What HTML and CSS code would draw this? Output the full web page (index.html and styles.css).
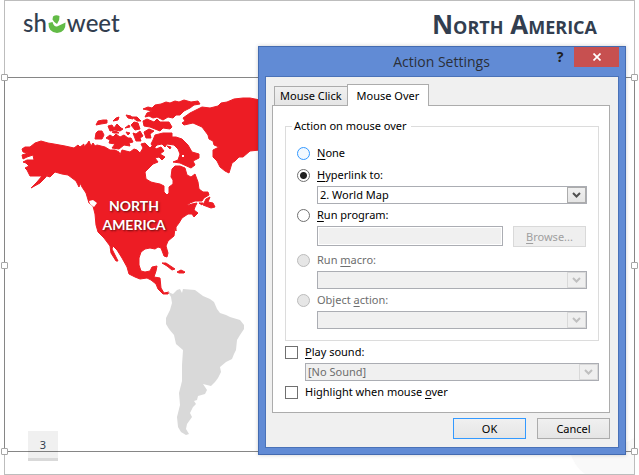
FILE: index.html
```html
<!DOCTYPE html>
<html lang="en">
<head>
  <meta charset="UTF-8">
  <meta name="viewport" content="width=device-width, initial-scale=1.0">
  <title>North America</title>
  <link rel="stylesheet" href="styles.css">
</head>
<body>
  <main class="slide">
    <header class="slide-header">
      <div class="logo">
        <span>sh</span>
        <svg class="logo-mark" width="18" height="20" viewBox="0 0 18 20">
          <path fill="#62bb46" d="M0.5 9 L4.5 8 Q6 13 9 12.5 L17.5 8.5 Q18 18.5 9 19 Q0 18 0.5 9Z"/>
          <path fill="#62bb46" d="M5 2.5 Q8 0.5 11.5 2 Q12 6 9 10 Q6 8.5 4.5 5.5Z"/>
        </svg>
        <span>weet</span>
      </div>
      <h1>North America</h1>
    </header>

    <section class="frame">
      <svg class="map" width="240" height="350" viewBox="20 90 240 350">
        <g class="north">
          <path d="M22 149 L25 147 30 147 35 143 41 141 48 143 54 144 65 146 74 148 78 145 80 147 84 144 83 147 87 144 89 141 91 146 93 143 95 146 97 145 105 147 110 150 115 150 119 152 120 155 122 150 126 151 130 152 134 149 137 150 140 153 143 148 141 144 145 143 150 148 153 145 156 149 161 147 164 151 160 154 165 157 162 160 159 157 155 158 158 162 153 164 149 168 145 172 146 179 151 182 155 183 160 184 164 186 164 192 167 195 169 193 169 187 173 184 173 180 171 177 172 169 175 166 180 166 185 168 187 175 191 177 195 174 198 182 199 189 203 192 208 192 209 195 204 198 202 201 195 201 190 203 186 206 192 204 197 203 195 207 194 210 198 213 194 217 192 214 188 214 182 218 179 223 176 227 176 231 175 228 174 236 168 241 166 246 168 253 167 257 164 256 161 248 158 247 155 249 150 248 145 249 141 252 139 258 139 265 141 271 145 272 150 271 152 267 157 266 156 271 154 277 160 278 161 288 164 293 169 292 168 294 163 294 158 289 156 284 151 280 147 278 140 279 135 277 129 274 127 267 122 258 117 250 113 246 112 249 115 255 118 261 116 261 111 253 110 246 104 238 98 232 96 225 95 214 93 206 89 203 86 193 82 187 80 183 79 187 76 181 68 175 62 174 55 172 50 177 47 176 50 172 45 178 40 183 31 188 37 182 42 176 37 176 30 176 27 170 25 168 29 166 26 163 23 162 27 160 34 160 33 155 27 157 23 159 22 155 28 153 23 152Z"/>
          <path d="M153 140 L155 135 163 133 172 133 172 137 176 137 182 139 188 145 192 152 199 154 199 158 193 161 195 165 191 168 180 163 173 162 178 160 180 154 178 149 174 145 167 144 165 147 162 144 157 145 154 148 151 144Z"/>
          <path d="M183 118 L190 113 196 110 202 107 210 108 218 106 221 103 227 102 234 99 243 98 250 98 260 100 V150 L250 151 243 157 239 157 235 161 232 163 229 173 225 171 220 167 217 161 213 157 213 150 219 147 214 145 213 141 209 139 208 135 202 127 193 123 184 125 182 123 185 121Z"/>
          <path d="M143 109 L148 107 152 108 155 105 161 104 166 102 170 103 175 101 179 102 184 100 191 102 198 101 200 104 194 105 190 108 184 111 180 115 176 115 173 118 168 117 163 120 157 117 153 118 149 116 145 117 147 113 152 111Z"/>
          <path d="M143 121 L147 119 154 122 157 119 160 122 169 122 172 127 170 129 163 128 160 131 155 129 150 127 144 126Z"/>
          <path d="M95 139 L96 133 98 131 102 131 104 135 102 139Z"/>
          <path d="M106 138 L110 135 113 137 116 134 120 137 124 135 128 138 131 138 133 142 129 143 130 146 124 145 119 149 112 148 115 144 109 143 110 140Z"/>
          <path d="M96 125 L98 121 103 120 107 120 107 123 101 124Z M108 126 L112 125 114 128 117 124 121 128 123 129 120 131 115 130 110 131Z M113 121 L116 118 119 117 118 120Z M126 115 L131 116 133 119 128 118Z M131 125 L134 122 138 123 140 129 135 130Z M125 128 L129 125 130 127Z M133 133 L136 134 140 131 143 136 140 138 141 141 136 141Z M144 132 L149 129 154 131 150 134 151 138 146 138Z M132 117 L137 117 141 121 137 121Z M112 132 L116 131 119 133 114 133Z M126 132 L130 133 128 135Z M167 146 L171 147 170 149Z"/>
          <path d="M203 205 L206 199 210 197 208 202 213 203 215 207 211 208Z M199 203 L203 203 202 205Z M162 263 L166 263 175 269 172 270 167 266Z M177 272 L181 270 185 272 184 273 179 273Z"/>
        </g>
        <path class="hole" d="M89 201 L93 200 97 203 94 207 90 204Z M182 155 h2 v2 h-2Z"/>
        <path class="south" d="M168 292 L173 294 177 290 180 289 182 293 183 289 195 290 203 296 210 299 214 302 217 309 220 313 226 315 230 317 240 320 244 325 244 329 240 335 237 340 236 350 234 354 232 359 226 362 220 367 221 372 218 378 215 382 211 386 203 384 207 390 205 394 198 396 197 400 194 401 196 404 193 407 190 413 192 417 187 424 186 429 189 434 186 435 181 432 178 427 177 417 180 405 179 393 182 381 182 365 183 350 176 344 174 335 169 329 166 324 166 318 170 310 172 303 171 297Z"/>
        <text class="map-label" x="134" y="211">NORTH</text>
        <text class="map-label" x="134" y="230">AMERICA</text>
      </svg>
      <span class="handle top left"></span>
      <span class="handle top right"></span>
      <span class="handle middle left"></span>
      <span class="handle middle right"></span>
      <span class="handle bottom left"></span>
      <span class="handle bottom right"></span>
    </section>
    <div class="page-number">3</div>
    <svg class="corner" width="64" height="36" viewBox="0 0 64 36"><path fill="#f9f9f9" d="M64 0 V36 H15 Q4 28 0 14 L50 8Z"/></svg>
  </main>

  <form class="dialog" role="dialog" aria-labelledby="dialog-title">
    <div class="titlebar">
      <h2 id="dialog-title">Action Settings</h2>
      <button type="button" class="help" aria-label="Help">?</button>
      <button type="button" class="close" aria-label="Close">
        <svg width="8" height="8" viewBox="0 0 8 8"><path d="M0.5 0.5 L7.5 7.5 M7.5 0.5 L0.5 7.5" stroke="#fff" stroke-width="1.7"/></svg>
      </button>
    </div>
    <div class="client">
      <div class="tabs" role="tablist">
        <button type="button" class="tab" role="tab">Mouse Click</button>
        <button type="button" class="tab active" role="tab" aria-selected="true">Mouse Over</button>
      </div>
      <div class="panel">
        <fieldset>
          <legend>Action on mouse over</legend>
          <div class="options">
            <div class="option">
              <input type="radio" name="action" id="none" class="hot">
              <label for="none"><u>N</u>one</label>
            </div>
            <div class="option">
              <input type="radio" name="action" id="hyperlink" checked>
              <label for="hyperlink"><u>H</u>yperlink to:</label>
            </div>
            <div class="combo">
              <select aria-label="Hyperlink to"><option>2. World Map</option></select>
              <svg class="arrow" viewBox="0 0 17 14"><path d="M5 5 L8.5 8.5 L12 5"/></svg>
            </div>
            <div class="option">
              <input type="radio" name="action" id="program">
              <label for="program"><u>R</u>un program:</label>
            </div>
            <div class="program-row">
              <input type="text" aria-label="Run program" disabled>
              <button type="button" class="btn" disabled><u>B</u>rowse...</button>
            </div>
            <div class="option spaced">
              <input type="radio" name="action" id="macro" disabled>
              <label for="macro">Run <u>m</u>acro:</label>
            </div>
            <div class="combo disabled">
              <select aria-label="Run macro" disabled><option></option></select>
              <svg class="arrow" viewBox="0 0 17 14"><path d="M5 5 L8.5 8.5 L12 5"/></svg>
            </div>
            <div class="option">
              <input type="radio" name="action" id="object" disabled>
              <label for="object">Object <u>a</u>ction:</label>
            </div>
            <div class="combo disabled">
              <select aria-label="Object action" disabled><option></option></select>
              <svg class="arrow" viewBox="0 0 17 14"><path d="M5 5 L8.5 8.5 L12 5"/></svg>
            </div>
          </div>
        </fieldset>
        <div class="options extra">
          <div class="option">
            <input type="checkbox" id="sound">
            <label for="sound"><u>P</u>lay sound:</label>
          </div>
          <div class="combo disabled">
            <select aria-label="Play sound" disabled><option>[No Sound]</option></select>
            <svg class="arrow" viewBox="0 0 17 14"><path d="M5 5 L8.5 8.5 L12 5"/></svg>
          </div>
          <div class="option">
            <input type="checkbox" id="highlight">
            <label for="highlight">Highlight when mouse <u>o</u>ver</label>
          </div>
        </div>
      </div>
      <div class="buttons">
        <button type="submit" class="btn default">OK</button>
        <button type="button" class="btn">Cancel</button>
      </div>
    </div>
  </form>
</body>
</html>
```

FILE: styles.css
```css
* {
  box-sizing: border-box;
}
body {
  margin: 0;
  background: #fff;
  color: #000;
  font: 11px/16px "Noto Sans", "Open Sans", sans-serif;
}
button, input, select {
  margin: 0;
  font: inherit;
  color: inherit;
}

/* slide */
.slide {
  position: relative;
  display: flex;
  flex-direction: column;
  min-height: 100vh;
  margin: 0 4px;
  border: 1px solid #bdbdbd;
}
.slide-header {
  display: flex;
  justify-content: space-between;
  height: 76px;
  padding: 6px 37px 0 18px;
  color: #323e4f;
}
.logo {
  display: flex;
  height: 32px;
  font: 500 24px/32px Lato, sans-serif;
}
.logo-mark {
  margin: 7px 1px 0;
}
h1 {
  margin: 0;
  font: bold 26px/34px "Open Sans", sans-serif;
  font-variant: small-caps;
}
.frame {
  position: relative;
  flex: 1;
  margin: 0 -1px 22px;
  border: 1px solid #868686;
}
.map {
  display: block;
  margin: 12px 0 0 15px;
}
.north {
  fill: #ed1c24;
  stroke: #ed1c24;
  stroke-width: 1;
  stroke-linejoin: round;
}
.hole {
  fill: #fff;
}
.south {
  fill: #d9d9d9;
}
.map-label {
  fill: #fff;
  font: bold 14px Lato, sans-serif;
  text-anchor: middle;
  text-shadow: 1px 1px 2px rgba(0, 0, 0, 0.6);
}
.handle {
  position: absolute;
  width: 7px;
  height: 7px;
  border: 1px solid #a6a6a6;
  border-radius: 1px;
  background: #fff;
}
.handle.left { left: -4px; }
.handle.right { right: -4px; }
.handle.top { top: -4px; }
.handle.middle { top: calc(50% - 3px); }
.handle.bottom { bottom: -4px; }
.page-number {
  position: absolute;
  left: 23px;
  bottom: 13px;
  width: 30px;
  height: 30px;
  border-bottom: 3px solid #d9d9d9;
  background: rgba(0, 0, 0, 0.06);
  color: #323e4f;
  line-height: 27px;
  text-align: center;
}
.corner {
  position: absolute;
  right: 0;
  bottom: 0;
  z-index: -1;
}

/* dialog */
.dialog {
  position: absolute;
  top: 46px;
  right: 13px;
  width: 368px;
  padding: 0 6px 6px;
  border: 1px solid #446bb0;
  background: #618bd5;
  box-shadow: 0 0 4px rgba(0, 0, 0, 0.2);
}
.titlebar {
  display: grid;
  grid-template-columns: 1fr auto 1fr auto;
  height: 29px;
}
.titlebar h2 {
  grid-column: 2;
  margin: 0;
  padding-left: 44px;
  color: #2b2f38;
  font: 14px/30px "Open Sans", sans-serif;
}
.help {
  justify-self: end;
  width: 20px;
  height: 20px;
  margin-right: 4px;
  padding: 0;
  border: 0;
  background: none;
  color: #1e1e1e;
  font-size: 14px;
  font-weight: bold;
  line-height: 20px;
}
.close {
  display: flex;
  align-items: center;
  justify-content: center;
  width: 45px;
  height: 20px;
  border: 0;
  background: #c75050;
}
.client {
  padding: 7px 8px 8px 6px;
  border: 1px solid #4a72b8;
  background: #f0f0f0;
}
.tabs {
  display: flex;
  align-items: flex-end;
  padding-left: 2px;
}
.tab {
  height: 19px;
  padding: 0 5px;
  border: 1px solid #acacac;
  border-width: 1px 0 0 1px;
  background: linear-gradient(#f0f0f0, #e5e5e5);
  line-height: 18px;
}
.tab.active {
  z-index: 1;
  height: 22px;
  margin-bottom: -1px;
  padding: 0 9px;
  border-right-width: 1px;
  background: #fff;
  line-height: 20px;
}
.panel {
  padding: 12px 10px 10px 12px;
  border: 1px solid #acacac;
  background: #fff;
}
fieldset {
  min-width: 0;
  margin: 0;
  padding: 9px 11px 11px;
  border: 1px solid #dcdcdc;
}
legend {
  margin-left: -5px;
  padding: 0 4px 0 2px;
}
.options {
  display: grid;
  gap: 1px;
}
.option {
  display: flex;
  align-items: center;
  gap: 7px;
  height: 20px;
}
.option:first-child + .option {
  margin-top: 1px;
}
.option.spaced {
  margin-top: 2px;
}
.extra {
  margin-top: 1px;
}
.option input {
  appearance: none;
  width: 13px;
  height: 13px;
  border: 1px solid #707070;
  background: #fff;
}
.option input[type="radio"] {
  border-radius: 50%;
}
.option input:checked {
  background: radial-gradient(circle, #212121 3px, #fff 4px);
}
.option input.hot {
  border-color: #3399ff;
  background: #f3f9ff;
}
.option input:disabled {
  border-color: #bcbcbc;
  background: #e6e6e6;
}
.option input:disabled + label {
  color: #6d6d6d;
}
.combo {
  position: relative;
  height: 18px;
  margin-left: 20px;
}
.combo select {
  appearance: none;
  display: block;
  width: 100%;
  height: 18px;
  padding: 0 20px 0 2px;
  border: 1px solid #abadb3;
  border-radius: 0;
  background: #fff;
  line-height: 16px;
}
.combo select:disabled {
  background: #f0f0f0;
  color: #6d6d6d;
  opacity: 1;
}
.arrow {
  position: absolute;
  top: 1px;
  right: 1px;
  width: 19px;
  height: 16px;
  border: 1px solid #acacac;
  background: linear-gradient(#f0f0f0, #e5e5e5);
  pointer-events: none;
}
.arrow path {
  fill: none;
  stroke: #505050;
  stroke-width: 2;
}
.disabled .arrow {
  border-color: #d9d9d9;
  background: #efefef;
}
.disabled .arrow path {
  stroke: #bfbfbf;
}
.program-row {
  display: flex;
  align-items: flex-start;
  gap: 10px;
  margin-left: 20px;
  padding-right: 1px;
}
.program-row input {
  flex: 1;
  min-width: 0;
  height: 20px;
  padding: 1px;
  border: 1px solid #abadb3;
  background: #f0f0f0;
  box-shadow: inset 0 0 0 1px #fff;
}
.btn {
  width: 73px;
  height: 21px;
  padding: 0;
  border: 1px solid #acacac;
  background: linear-gradient(#f0f0f0, #e5e5e5);
  line-height: 18px;
}
.btn.default {
  border-color: #3399ff;
}
.btn:disabled {
  border-color: #d9d9d9;
  background: #efefef;
  color: #a0a0a0;
}
.buttons {
  display: flex;
  justify-content: flex-end;
  gap: 11px;
  margin-top: 5px;
}
u {
  text-underline-offset: 2px;
}
```
